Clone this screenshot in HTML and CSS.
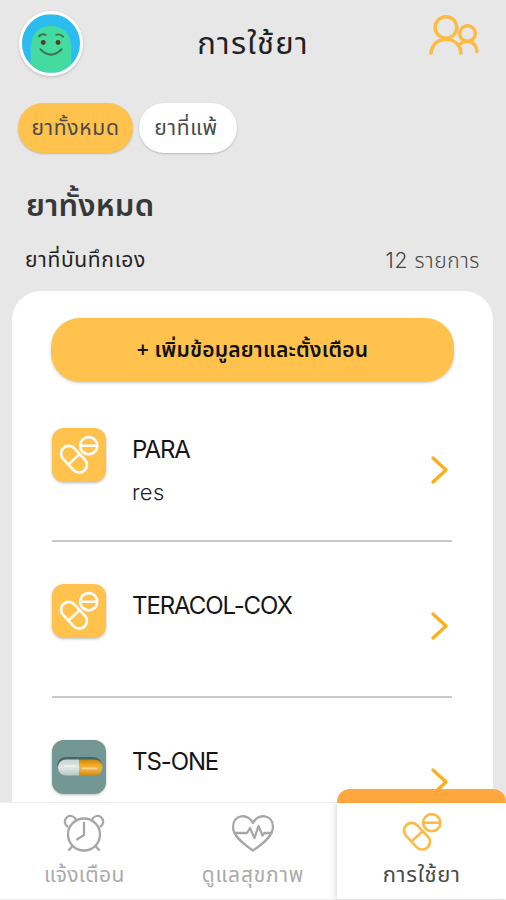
FILE: index.html
```html
<!DOCTYPE html>
<html lang="th">
<head>
<meta charset="utf-8">
<title>การใช้ยา</title>
<link rel="stylesheet" href="styles.css">
</head>
<body>
<svg width="0" height="0" class="defs">
  <symbol id="pills" viewBox="0 0 54 54">
    <g fill="none" stroke="currentColor" stroke-width="2.6">
      <rect x="-7.7" y="-15.4" width="15.4" height="30.8" rx="7.7" transform="translate(22 31.2) rotate(-43)"/>
      <path d="M16.600 36.400 27.600 26.100"/>
      <circle cx="36.700" cy="17.700" r="8.600"/>
      <path d="M28.100 17.700h17.200"/>
    </g>
  </symbol>
  <symbol id="chevron" viewBox="0 0 20 30">
    <path d="M3 3 16 15 3 27" fill="none" stroke="#fbb11d" stroke-width="3.4" stroke-linecap="round" stroke-linejoin="round"/>
  </symbol>
</svg>
<div class="app">
  <header class="header">
    <div class="avatar">
      <svg viewBox="0 0 60 60">
        <rect width="60" height="60" fill="#2bbdf0"/>
        <path d="M9 60V35C9 21 17 12 30 12s21 9 21 23v25z" fill="#43dba0"/>
        <g fill="none" stroke="#3d7350" stroke-width="2" stroke-linecap="round">
          <path d="M17.500 22.500q3-3 7-1.500M35.500 21q4-1.500 7 2"/>
          <path d="M19 36q11 11 22 0"/>
        </g>
        <circle cx="22" cy="29" r="2.500" fill="#5b3b1e"/><circle cx="37.300" cy="29" r="2.500" fill="#5b3b1e"/>
      </svg>
    </div>
    <h1 class="title">การใช้ยา</h1>
    <svg class="people" viewBox="0 0 52 42" fill="none" stroke="#fdba45" stroke-width="3.500" stroke-linecap="round">
      <circle cx="17" cy="13.500" r="10.800"/><path d="M2 39C3 31 8 25.500 17 25.500S31 31 32 39"/>
      <circle cx="38.500" cy="19.500" r="7.800"/><path d="M31 30C37 25 47 27 48 37.500"/>
    </svg>
  </header>
  <div class="chips">
    <span class="chip chip-on">ยาทั้งหมด</span>
    <span class="chip">ยาที่แพ้</span>
  </div>
  <h2 class="heading">ยาทั้งหมด</h2>
  <div class="subrow"><span>ยาที่บันทึกเอง</span><span class="count">12 รายการ</span></div>
  <main class="card">
    <button class="add">+ เพิ่มข้อมูลยาและตั้งเตือน</button>
    <div class="item">
      <svg class="thumb"><use href="#pills"/></svg>
      <div class="info"><div class="name">PARA</div><div class="note">res</div></div>
      <svg class="chevron"><use href="#chevron"/></svg>
    </div>
    <div class="item">
      <svg class="thumb"><use href="#pills"/></svg>
      <div class="info"><div class="name">TERACOL-COX</div></div>
      <svg class="chevron"><use href="#chevron"/></svg>
    </div>
    <div class="item">
      <svg class="thumb" viewBox="0 0 54 54">
        <defs>
          <linearGradient id="w" x2="0" y2="1"><stop offset="0" stop-color="#c5d3d1"/><stop offset=".5" stop-color="#e0e8e6"/><stop offset="1" stop-color="#b5c7c5"/></linearGradient>
          <linearGradient id="o" x2="0" y2="1"><stop offset="0" stop-color="#c4860f"/><stop offset=".3" stop-color="#f0a51e"/><stop offset=".55" stop-color="#f3b646"/><stop offset="1" stop-color="#d48c12"/></linearGradient>
        </defs>
        <rect width="54" height="54" fill="#729795"/>
        <path d="M13 17h29q8 1 8 10l-45-1q1-8 8-9z" fill="#4a6461"/>
        <path d="M27 19.500H14a8 8 0 0 0 0 16h13z" fill="url(#w)"/>
        <path d="M27 19.500h15.500a8 8 0 0 1 0 16H27z" fill="url(#o)"/>
        <path d="M12 26h12M30 28.500h15" stroke="#fff" stroke-opacity=".4" stroke-width="2"/>
      </svg>
      <div class="info"><div class="name">TS-ONE</div></div>
      <svg class="chevron"><use href="#chevron"/></svg>
    </div>
  </main>
  <nav class="nav">
    <div class="tab">
      <svg class="tab-icon" viewBox="0 0 48 44" fill="none" stroke="#a7a7a7" stroke-width="2.300" stroke-linecap="round" stroke-linejoin="round">
        <circle cx="24" cy="23.500" r="16"/><path d="M24 12v12l-7 4.500M12.500 35 9 39M35.500 35l3.500 4"/>
        <path d="M7.500 15.500a5.700 5.700 0 1 1 8.500-6.500M40.500 15.500A5.700 5.700 0 1 0 32 9"/>
      </svg>
      <span class="label">แจ้งเตือน</span>
    </div>
    <div class="tab">
      <svg class="tab-icon" viewBox="0 0 48 44" fill="none" stroke="#a7a7a7" stroke-width="2.300" stroke-linecap="round" stroke-linejoin="round">
        <path d="M24 39.500C13 32 4 24.500 4 16 4 3 19 2 24 12 29 2 44 3 44 16c0 8.500-9 16-20 23.500z"/>
        <path d="M5.500 22H18l3-5 4.500 10 4-12 4 9.500 2-2.500h7"/>
      </svg>
      <span class="label label-wide">ดูแลสุขภาพ</span>
    </div>
    <div class="tab tab-on">
      <svg class="tab-icon tab-pills"><use href="#pills"/></svg>
      <span class="label label-on">การใช้ยา</span>
    </div>
  </nav>
</div>
</body>
</html>
```
FILE: styles.css
```css
* { box-sizing: border-box; }
body { margin: 0; background: #e7e7e7; font-family: "Noto Sans Thai", "Noto Sans", Inter, sans-serif; color: #222; }
.defs { display: block; }
.defs, svg { flex: none; }
.app { width: 506px; height: 900px; overflow: hidden; display: flex; flex-direction: column; }
.header { height: 87px; flex: none; display: flex; justify-content: space-between; padding: 11px 25px 0 19px; }
.avatar { width: 64px; height: 65px; border: 3px solid #fff; border-radius: 50%; overflow: hidden; box-shadow: 0 1px 3px #0003; }
.avatar svg { display: block; width: 100%; height: 100%; }
.title { margin: 0; font-size: 31px; font-weight: 400; line-height: 65px; letter-spacing: 1.2px; padding: 1px 6px 0 0; }
.people { width: 52px; height: 42px; margin-top: 3px; }
.chips { display: flex; gap: 6px; padding: 16px 0 0 18px; flex: none; height: 66px; }
.chip { width: 98px; height: 50px; border-radius: 25px; background: #fff; box-shadow: 0 1px 2px #0003; text-align: center; line-height: 52px; font-size: 21px; letter-spacing: .7px; color: #4a4a4a; white-space: nowrap; padding-right: 4px; }
.chip-on { width: 115px; background: #ffc24d; padding: 0; }
.heading { margin: 0; height: 85px; padding: 20px 0 0 26px; line-height: 67px; font-size: 31px; font-weight: 600; letter-spacing: .2px; color: #383838; flex: none; white-space: nowrap; }
.subrow { height: 53px; line-height: 46px; display: flex; justify-content: space-between; padding: 0 26px 0 25px; font-size: 21px; letter-spacing: .7px; flex: none; white-space: nowrap; }
.count { color: #444; font-family: Inter, "Noto Sans Thai", sans-serif; font-weight: 300; line-height: 45px; letter-spacing: .6px; }
.card { margin: 0 13px 0 12px; height: 511px; flex: none; overflow: hidden; background: #fff; border-radius: 29px 29px 0 0; padding: 27px 39px 0; }
.add { display: block; width: 403px; height: 64px; border: 0; padding: 0; border-radius: 29px; background: #ffc24d; box-shadow: 0 1px 3px #0003; color: #111; font: 600 21px/66px "Noto Sans Thai", "Noto Sans", sans-serif; letter-spacing: .2px; white-space: nowrap; }
.item { height: 156px; margin: 0 2px 0 1px; border-bottom: 2px solid #c9c9c9; display: flex; padding-top: 42px; }
.add + .item { height: 160px; padding-top: 46px; }
.thumb { width: 54px; height: 54px; border-radius: 12px; background: #ffc24d; color: #fff; box-shadow: 0 1px 3px #0004; }
.info { flex: 1; padding: 1px 0 0 26px; font-family: Inter, sans-serif; font-size: 24px; line-height: 42px; }
.name { color: #151515; letter-spacing: -1.1px; }
.note { font-size: 22px; color: #222; font-weight: 300; letter-spacing: .3px; }
.chevron { width: 20px; height: 30px; margin: 27px 2px 0 0; }
.nav { height: 98px; flex: none; display: flex; background: #fff; border-bottom: 1px solid #eee; border-top: 1px solid #eee; }
.tab { position: relative; flex: 1; display: flex; flex-direction: column; align-items: center; font-size: 21px; line-height: 33px; color: #aaa; white-space: nowrap; padding-top: 8px; }
.label { letter-spacing: .4px; }
.label-wide { letter-spacing: .8px; }
.label-on { font-size: 22px; letter-spacing: .7px; }
.tab-icon { width: 48px; height: 44px; margin-bottom: 4px; }
.tab-on { color: #4a4a4a; background: #fff; box-shadow: -2px 0 5px #0002; }
.tab-on::before { content: ""; position: absolute; left: 0; right: 0; top: -14px; height: 14px; border-radius: 13px 13px 0 0; background: #ffa63e; }
.tab-pills { color: #fdba45; width: 54px; height: 54px; margin: -6px 0 0; }
```
